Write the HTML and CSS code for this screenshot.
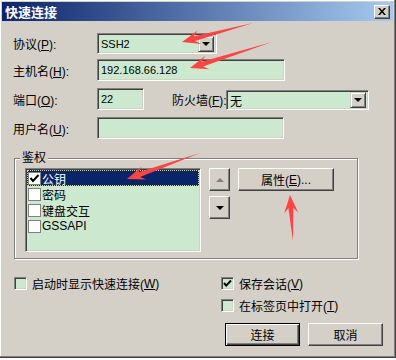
FILE: index.html
```html
<!DOCTYPE html>
<html lang="zh-CN">
<head>
    <meta charset="UTF-8">
    <title>快速连接</title>
    <link rel="stylesheet" href="styles.css">
</head>
<body>
    <div class="window">
        <div class="titlebar">
            <span class="title">快速连接</span>
            <span class="close">
                <svg width="8" height="7" viewBox="0 0 8 7"><path d="M0 0h2l2 2.5L6 0h2L5 3.5 8 7H6L4 4.5 2 7H0l3-3.5z" fill="#000"/></svg>
            </span>
        </div>

        <div class="content">
            <div class="row">
                <label class="lbl">协议(<u>P</u>):</label>
                <div class="field combo w-protocol">
                    <span class="value">SSH2</span>
                    <span class="drop"><i class="tri"></i></span>
                </div>
            </div>

            <div class="row r-host">
                <label class="lbl">主机名(<u>H</u>):</label>
                <div class="field edit w-host"><span class="value">192.168.66.128</span></div>
            </div>

            <div class="row r-port">
                <label class="lbl">端口(<u>O</u>):</label>
                <div class="field edit w-port"><span class="value">22</span></div>
                <label class="lbl-fw">防火墙(<u>F</u>):</label>
                <div class="field combo w-firewall">
                    <span class="value value-cjk">无</span>
                    <span class="drop"><i class="tri"></i></span>
                </div>
            </div>

            <div class="row r-user">
                <label class="lbl">用户名(<u>U</u>):</label>
                <div class="field edit w-user"></div>
            </div>

            <fieldset class="group">
                <legend>鉴权</legend>
                <div class="auth">
                    <ul class="list">
                        <li class="item selected"><span class="box"><svg width="11" height="11" viewBox="0 0 11 11"><path d="M1.5 5l2.5 3 5.5-6" stroke="#000" stroke-width="2" fill="none"/></svg></span>公钥</li>
                        <li class="item"><span class="box"></span>密码</li>
                        <li class="item"><span class="box"></span>键盘交互</li>
                        <li class="item"><span class="box"></span>GSSAPI</li>
                    </ul>
                    <div class="order">
                        <span class="btn arrow-btn"><i class="tri tri-up"></i></span>
                        <span class="btn arrow-btn"><i class="tri"></i></span>
                    </div>
                    <span class="btn btn-props">属性(<u>E</u>)...</span>
                </div>
            </fieldset>

            <div class="bottom">
                <div class="col-left">
                    <div class="opt"><span class="check"></span>启动时显示快速连接(<u>W</u>)</div>
                </div>
                <div class="col-right">
                    <div class="opt"><span class="check"><svg width="9" height="9" viewBox="0 0 9 9"><path d="M1 4l2.2 2.6L8 1.5" stroke="#000" stroke-width="2" fill="none"/></svg></span>保存会话(<u>V</u>)</div>
                    <div class="opt opt-tab"><span class="check"></span>在标签页中打开(<u>T</u>)</div>
                    <div class="actions">
                        <span class="btn btn-default">连接</span>
                        <span class="btn">取消</span>
                    </div>
                </div>
            </div>
        </div>

        <!-- 标注箭头 -->
        <svg class="marks" width="396" height="360" viewBox="0 0 396 360">
            <polygon points="253,23 193.9,36.2 197.6,30.6 182,42 201.2,44.1 195.2,41.1" />
            <polygon points="272,42 201.6,61.7 205,55.9 190,68 209.3,69.2 203.1,66.5" />
            <polygon points="200,153 138.4,172.3 141.6,166.4 127,179 146.3,179.6 140.1,177" />
            <polygon points="293,241 293.3,207.8 298.2,212.5 290,195 284.2,213.4 288.4,208.1" />
        </svg>
    </div>
</body>
</html>
```

FILE: styles.css
```css
* {
    margin: 0;
    padding: 0;
    box-sizing: border-box;
}

body {
    background: #fff;
    font-family: "Liberation Sans", "Noto Sans CJK SC", sans-serif;
    font-size: 12px;
    color: #000;
}

u {
    text-decoration: underline;
}

.window {
    position: relative;
    width: 396px;
    height: 358px;
    padding: 2px;
    background: #d4d0c8;
    border-right: 1px solid #404040;
    border-bottom: 1px solid #404040;
    box-shadow: inset -1px -1px #808080, inset 1px 1px #fff;
}

.titlebar {
    height: 19px;
    display: flex;
    align-items: center;
    justify-content: space-between;
    padding: 0 3px 0 3px;
    background: linear-gradient(to right, #0a246a, #a6caf0);
}

.title {
    color: #fff;
    font-weight: bold;
    font-size: 13px;
    line-height: 19px;
    font-family: "Noto Sans CJK SC", sans-serif;
}

.close {
    width: 16px;
    height: 14px;
    display: flex;
    align-items: center;
    justify-content: center;
    background: #d4d0c8;
    border: 1px solid;
    border-color: #fff #404040 #404040 #fff;
    box-shadow: inset -1px -1px #808080;
}

.content {
    padding: 12px 0 0 11px;
}

.row {
    display: flex;
    align-items: center;
}

.r-host {
    margin-top: 5px;
}

.r-port {
    margin-top: 7px;
}

.r-user {
    margin-top: 7px;
}

.lbl {
    width: 84px;
    flex-shrink: 0;
    white-space: nowrap;
}

.lbl-fw {
    width: 54px;
    flex-shrink: 0;
    margin-left: 28px;
    white-space: nowrap;
    align-self: flex-end;
    line-height: 18px;
}

/* sunken 3d fields */
.field {
    display: flex;
    align-items: center;
    flex-shrink: 0;
    background: #cce8cf;
    border: 1px solid;
    border-color: #808080 #fff #fff #808080;
    box-shadow: inset 1px 1px #404040, inset -1px -1px #d4d0c8;
    padding: 0 2px 0 2px;
}

.edit {
    height: 22px;
}

.combo {
    height: 21px;
    justify-content: space-between;
}

.value {
    font-size: 11px;
    padding-left: 1px;
}

.value-cjk {
    font-size: 12px;
}

.w-protocol {
    width: 120px;
}

.w-host {
    width: 188px;
}

.w-port {
    width: 47px;
}

.w-firewall {
    width: 143px;
    height: 20px;
    align-self: flex-end;
}

.w-user {
    width: 187px;
}

.drop {
    width: 16px;
    height: 16px;
    display: flex;
    align-items: center;
    justify-content: center;
    background: #d4d0c8;
    border: 1px solid;
    border-color: #d4d0c8 #404040 #404040 #d4d0c8;
    box-shadow: inset 1px 1px #fff, inset -1px -1px #808080;
}

.tri {
    width: 0;
    height: 0;
    border-left: 4px solid transparent;
    border-right: 4px solid transparent;
    border-top: 4px solid #000;
}

.tri-up {
    border-top: 0;
    border-bottom: 4px solid #808080;
}

/* group box */
.group {
    margin: 12px 0 0 1px;
    width: 344px;
    border: 1px solid #808080;
    box-shadow: inset 1px 1px #fff, 1px 1px #fff;
    padding: 3px 9px 6px 10px;
}

.group legend {
    margin-left: -5px;
    padding: 0 2px;
    line-height: 14px;
    background: #d4d0c8;
}

.auth {
    display: flex;
    align-items: flex-start;
}

.list {
    list-style: none;
    width: 176px;
    height: 84px;
    background: #cce8cf;
    border: 1px solid;
    border-color: #808080 #fff #fff #808080;
    box-shadow: inset 1px 1px #404040, inset -1px -1px #d4d0c8;
    padding: 1px;
}

.item {
    height: 16px;
    display: flex;
    align-items: center;
    padding-left: 1px;
}

.item.selected {
    background: #0a246a;
    color: #fff;
    outline: 1px dotted #d8d890;
    outline-offset: -1px;
}

.box {
    width: 13px;
    height: 13px;
    margin-right: 1px;
    display: flex;
    align-items: center;
    justify-content: center;
    background: #fff;
    border: 1px solid #808080;
}

.order {
    display: flex;
    flex-direction: column;
    gap: 5px;
    margin-left: 8px;
}

/* raised buttons */
.btn {
    display: flex;
    align-items: center;
    justify-content: center;
    width: 75px;
    height: 23px;
    background: #d4d0c8;
    border: 1px solid;
    border-color: #fff #404040 #404040 #fff;
    box-shadow: inset -1px -1px #808080;
}

.arrow-btn {
    width: 21px;
}

.btn-props {
    width: 96px;
    margin-left: 8px;
}

.btn-default {
    border: 1px solid #000;
    box-shadow: inset 1px 1px #fff, inset -1px -1px #404040, inset -2px -2px #808080;
}

/* options and actions */
.bottom {
    display: flex;
    margin-top: 18px;
}

.col-left {
    width: 207px;
    margin-left: 1px;
}

.opt {
    display: flex;
    align-items: center;
    height: 13px;
}

.opt-tab {
    margin-top: 9px;
}

.check {
    width: 13px;
    height: 13px;
    margin-right: 5px;
    display: flex;
    align-items: center;
    justify-content: center;
    background: #cce8cf;
    border: 1px solid;
    border-color: #808080 #fff #fff #808080;
    box-shadow: inset 1px 1px #404040, inset -1px -1px #d4d0c8;
}

.actions {
    display: flex;
    gap: 8px;
    margin: 11px 0 0 4px;
}

.marks {
    position: absolute;
    left: 0;
    top: 0;
    pointer-events: none;
}

.marks polygon {
    fill: #f44;
}
```
